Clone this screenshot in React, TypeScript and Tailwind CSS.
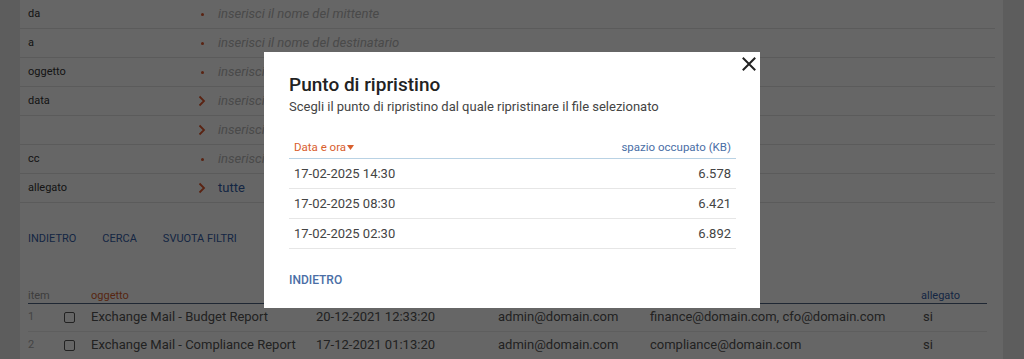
import React from 'react';

const filters = [
  { label: 'da', marker: 'dot', text: 'inserisci il nome del mittente' },
  { label: 'a', marker: 'dot', text: 'inserisci il nome del destinatario' },
  { label: 'oggetto', marker: 'dot', text: "inserisci l'oggetto della mail" },
  { label: 'data', marker: 'chevron', text: 'inserisci la data di inizio' },
  { label: '', marker: 'chevron', text: 'inserisci la data di fine' },
  { label: 'cc', marker: 'dot', text: 'inserisci il nome in copia' },
  { label: 'allegato', marker: 'chevron', text: 'tutte', link: true },
];

const mails = [
  {
    n: 1,
    subject: 'Exchange Mail - Budget Report',
    date: '20-12-2021 12:33:20',
    from: 'admin@domain.com',
    to: 'finance@domain.com, cfo@domain.com',
    att: 'si',
  },
  {
    n: 2,
    subject: 'Exchange Mail - Compliance Report',
    date: '17-12-2021 01:13:20',
    from: 'admin@domain.com',
    to: 'compliance@domain.com',
    att: 'si',
  },
];

const restorePoints = [
  { date: '17-02-2025 14:30', size: '6.578' },
  { date: '17-02-2025 08:30', size: '6.421' },
  { date: '17-02-2025 02:30', size: '6.892' },
];

const Chevron = () => (
  <svg width="8" height="12" viewBox="0 0 8 12" fill="none" stroke="#e0582e" strokeWidth="1.8">
    <path d="M1.5 1.5 L6 6 L1.5 10.5" />
  </svg>
);

const FilterRow: React.FC<{ label: string; marker: string; text: string; link?: boolean }> = ({ label, marker, text, link }) => (
  <div className="flex items-center h-[29px] border-b border-[#e4e4e4] px-2">
    <div className="w-[163px] text-[11px] text-[#333]">{label}</div>
    <div className="w-[22px] flex justify-center items-center">
      {marker === 'dot' ? <span className="w-[3px] h-[3px] rounded-full bg-[#e0582e]" /> : <Chevron />}
    </div>
    <div className={link ? 'pl-[5px] text-[13px] text-[#3560a8]' : 'pl-[5px] text-[13px] italic text-[#b8b8b8]'}>{text}</div>
  </div>
);

export default function App() {
  return (
    <div className="relative h-[359px] w-[1024px] overflow-hidden bg-[#e8e8e8]" style={{ fontFamily: 'Roboto, "Liberation Sans", sans-serif' }}>
      <div className="mx-[20px] w-[983px] h-full bg-white pr-[8px]">
        {filters.map((f, i) => (
          <FilterRow key={i} {...f} />
        ))}

        <div className="flex gap-[26px] px-2 mt-[28px] text-[11px] text-[#3560a8] uppercase">
          <span>indietro</span>
          <span>cerca</span>
          <span>svuota filtri</span>
        </div>

        <div className="mx-2 mt-[41px] text-[11px] leading-[14px] flex border-b border-[#4e6380]">
          <div className="w-[63px] text-[#999]">item</div>
          <div className="w-[225px] text-[#d9602e]">oggetto</div>
          <div className="w-[182px] text-[#3560a8]">data</div>
          <div className="w-[152px] text-[#3560a8]">mittente</div>
          <div className="w-[271px] text-[#3560a8]">destinatari</div>
          <div className="text-[#3560a8]">allegato</div>
        </div>
        {mails.map((m) => (
          <div key={m.n} className="mx-2 flex items-center h-[28px] border-b border-[#ececec] text-[13px] text-[#555]">
            <div className="w-[36px] text-[11px] text-[#aaa]">{m.n}</div>
            <div className="w-[27px]">
              <span className="block w-[11px] h-[11px] border border-[#555] rounded-[2px]" />
            </div>
            <div className="w-[225px]">{m.subject}</div>
            <div className="w-[182px]">{m.date}</div>
            <div className="w-[152px]">{m.from}</div>
            <div className="w-[271px]">{m.to}</div>
            <div className="pl-[2px]">{m.att}</div>
          </div>
        ))}
      </div>

      <div className="absolute inset-0 bg-black/60 flex items-center justify-center">
        <div className="relative w-[496px] h-[256px] bg-white pt-[22px] px-[25px] pr-[24px]">
          <button className="absolute right-[4px] top-[5px]">
            <svg className="block" width="14" height="14" viewBox="0 0 14 14" stroke="#222" strokeWidth="2" strokeLinecap="square">
              <path d="M1.5 1.5 L12.5 12.5 M12.5 1.5 L1.5 12.5" />
            </svg>
          </button>
          <h2 className="text-[19px] font-medium text-[#222] leading-[22px]">Punto di ripristino</h2>
          <p className="text-[13px] text-[#444] mt-[1px]">Scegli il punto di ripristino dal quale ripristinare il file selezionato</p>

          <div className="mt-[21px]">
            <div className="flex justify-between items-center px-[5px] h-[22px] border-b border-[#b9d2e4] text-[11.5px]">
              <span className="text-[#d9602e] flex items-center gap-[1px]">
                Data e ora
                <svg width="7" height="5" viewBox="0 0 7 5" fill="#d9602e"><path d="M0 0 H7 L3.5 5 Z" /></svg>
              </span>
              <span className="text-[#4a6ea6]">spazio occupato (KB)</span>
            </div>
            {restorePoints.map((r) => (
              <div key={r.date} className="flex justify-between items-center px-[5px] h-[30px] border-b border-[#e6e6e6] text-[13px] text-[#444]">
                <span>{r.date}</span>
                <span>{r.size}</span>
              </div>
            ))}
          </div>

          <div className="mt-[22px] text-[12px] font-medium text-[#4a6ea6] uppercase">indietro</div>
        </div>
      </div>
    </div>
  );
}
